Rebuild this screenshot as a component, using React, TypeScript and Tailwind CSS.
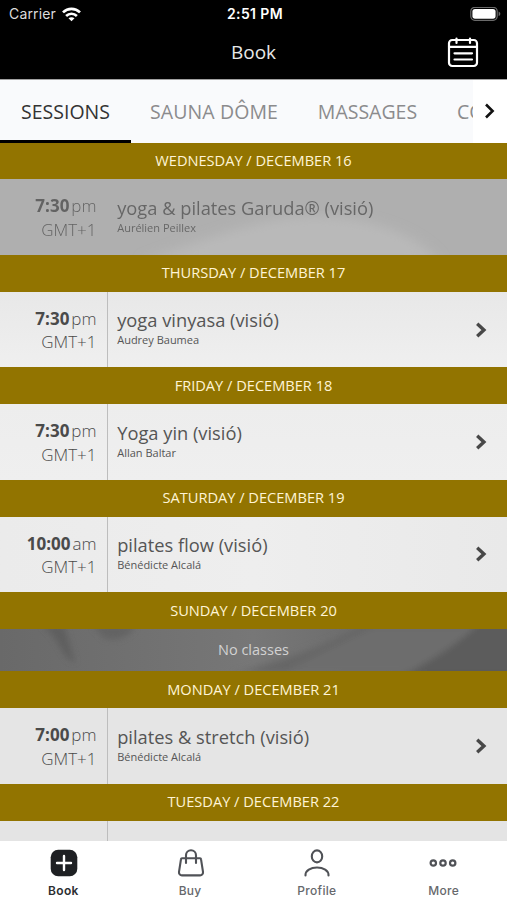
import clsx from "clsx";

type Session = {
  time: string;
  period: string;
  title: string;
  teacher: string;
  past?: boolean;
  shade: string;
};

type Day = {
  label: string;
  session?: Session;
};

const days: Day[] = [
  {
    label: "WEDNESDAY / DECEMBER 16",
    session: {
      time: "7:30",
      period: "pm",
      title: "yoga & pilates Garuda® (visió)",
      teacher: "Aurélien Peillex",
      past: true,
      shade: "bg-[#afafaf]",
    },
  },
  {
    label: "THURSDAY / DECEMBER 17",
    session: {
      time: "7:30",
      period: "pm",
      title: "yoga vinyasa (visió)",
      teacher: "Audrey Baumea",
      shade: "bg-linear-to-b from-[#e8e8e8] to-[#efefef]",
    },
  },
  {
    label: "FRIDAY / DECEMBER 18",
    session: {
      time: "7:30",
      period: "pm",
      title: "Yoga yin (visió)",
      teacher: "Allan Baltar",
      shade: "bg-linear-to-b from-[#ededed] to-[#efefef]",
    },
  },
  {
    label: "SATURDAY / DECEMBER 19",
    session: {
      time: "10:00",
      period: "am",
      title: "pilates flow (visió)",
      teacher: "Bénédicte Alcalá",
      shade: "bg-linear-to-r from-[#ebebeb] via-[#eeeeee] to-[#e9e9e9]",
    },
  },
  { label: "SUNDAY / DECEMBER 20" },
  {
    label: "MONDAY / DECEMBER 21",
    session: {
      time: "7:00",
      period: "pm",
      title: "pilates & stretch (visió)",
      teacher: "Bénédicte Alcalá",
      shade: "bg-[#e5e5e5]",
    },
  },
  { label: "TUESDAY / DECEMBER 22" },
];

function StatusBar() {
  return (
    <div className="flex h-7 items-center justify-between pr-[6px] pl-[9px] font-['Inter',sans-serif] text-white">
      <div className="flex w-[120px] items-center gap-[6px]">
        <span className="text-[14px] leading-none tracking-[0.15px] text-[#dcdcdc]">Carrier</span>
        <svg width="19" height="15" viewBox="0 0 19 15" fill="none" stroke="white" strokeWidth="2.7">
          <path d="M1 5.4C5.8.8 13.2.8 18 5.4" />
          <path d="M4.1 8.9c3.1-2.9 7.7-2.9 10.8 0" />
          <path d="M9.5 14.3 6.5 11.3c1.700-1.500 4.300-1.500 6 0Z" fill="white" stroke="none" />
        </svg>
      </div>
      <span className="text-[14px] leading-none font-semibold tracking-[0.4px]">2:51 PM</span>
      <div className="flex w-[120px] justify-end">
        <svg width="31" height="15" viewBox="0 0 31 15" fill="none">
          <rect x="0.8" y="0.3" width="26.4" height="13" rx="4" stroke="#6a6a6a" strokeWidth="1.2" />
          <rect x="2.4" y="1.9" width="23.2" height="9.8" rx="2.6" fill="white" />
          <path d="M28.6 4.500v4.600c1.100-.4 1.700-1.300 1.700-2.300s-.6-1.900-1.700-2.300Z" fill="#6a6a6a" />
        </svg>
      </div>
    </div>
  );
}

function TitleBar() {
  return (
    <div className="grid h-[52px] grid-cols-[1fr_auto_1fr] items-center border-b border-[#a0a0a0] pb-[2px]">
      <span />
      <h1 className="text-[19px] leading-none text-[#e8e8e8]">Book</h1>
      <svg
        className="mr-[28px] mb-[2px] justify-self-end"
        width="32"
        height="32"
        viewBox="0 0 32 32"
        fill="none"
        stroke="white"
        strokeWidth="2.2"
        strokeLinecap="round"
      >
        <rect x="2" y="4" width="28" height="26" rx="3.2" />
        <path d="M2 10.8h28M9.500 2.500v4.500M23 2.500v4.500M7.500 17.300h17.500M7.500 23.500h17.500" />
      </svg>
    </div>
  );
}

function Tabs() {
  return (
    <div className="flex h-[62.6px] bg-[#f9fafc] text-[19.5px] text-[#8b8b8d]">
      <div className="flex min-w-0 flex-1 overflow-hidden whitespace-nowrap">
        <div className="flex w-[131px] shrink-0 items-center justify-center border-b-[3px] border-black pt-[4px] text-[#333]">
          SESSIONS
        </div>
        <div className="flex w-[166px] shrink-0 items-center justify-center pt-px tracking-[0.1px]">SAUNA DÔME</div>
        <div className="flex w-[141px] shrink-0 items-center justify-center pt-px">MASSAGES</div>
        <div className="flex shrink-0 items-center pt-px pl-[19px]">COURS</div>
      </div>
      <div className="flex w-[34px] items-center justify-center bg-white">
        <svg width="12" height="18" viewBox="0 0 12 18" fill="none" stroke="#111" strokeWidth="2.6">
          <path d="m2 2.500 6.600 6.500L2 15.500" />
        </svg>
      </div>
    </div>
  );
}

function SessionRow({ session }: { session: Session }) {
  return (
    <div className={clsx("relative flex h-[75.6px] text-[#4a4a4a]", session.shade)}>
      {session.past && (
        <svg className="absolute inset-0 h-full w-full" viewBox="0 0 507 76" preserveAspectRatio="none">
          <defs>
            <filter id="soft">
              <feGaussianBlur stdDeviation="6" />
            </filter>
          </defs>
          <path d="M140 84C230 50 280 34 330 38c50 4 90 20 110 46Z" fill="#b9b9b9" filter="url(#soft)" />
        </svg>
      )}
      <div
        className={clsx(
          "flex w-[107.5px] flex-col items-end border-r pt-[15px] pr-[10px] text-[17px] leading-[23.5px]",
          session.past ? "border-transparent" : "border-[#bdbdbd]",
        )}
      >
        <div className={clsx("relative flex gap-[2px]", session.past && "opacity-75")}>
          <span className="font-bold">{session.time}</span>
          <span className="font-light">{session.period}</span>
        </div>
        <span className={clsx("relative font-light", session.past && "opacity-75")}>GMT+1</span>
      </div>
      <div className={clsx("relative flex-1 pt-[15.5px] pl-[9.7px] text-[#555]", session.past && "opacity-80")}>
        <div className="text-[18.3px] leading-[25px]">{session.title}</div>
        <div className="text-[11px] leading-[15px]">{session.teacher}</div>
      </div>
      {!session.past && (
        <svg
          className="mr-[19px] self-center"
          width="13"
          height="16"
          viewBox="0 0 13 16"
          fill="none"
          stroke="#484848"
          strokeWidth="3.400"
        >
          <path d="m2.200 1.800 6.700 6.200-6.700 6.200" />
        </svg>
      )}
    </div>
  );
}

function EmptyRow() {
  return (
    <div className="relative flex h-[42.4px] items-center justify-center overflow-hidden bg-linear-to-r from-[#696969] via-[#777] to-[#5e5e5e] text-[14.5px] text-[#d2d2d2]">
      <svg className="absolute inset-0 h-full w-full" viewBox="0 0 507 42" preserveAspectRatio="none">
        <defs>
          <filter id="fold" x="-10%" y="-30%" width="120%" height="160%">
            <feGaussianBlur stdDeviation="3" />
          </filter>
        </defs>
        <g filter="url(#fold)">
          <path d="M92 -4h44c-8 14-20 16-32 13Z" fill="#636363" />
          <path d="M42 -4h22l11 37c-14-4-12-20-33-37Z" fill="#5f5f5f" />
          <path d="M362 -4c-40 20-80 34-130 48h180C440 30 470 10 500-4Z" fill="#6d6d6d" />
          <path d="M478 -4c-20 18-44 34-75 50h110V-4Z" fill="#5c5c5c" />
          <path d="M362 -4c-34 20-60 30-112 46h35c30-16 60-30 95-46Z" fill="#666" />
        </g>
      </svg>
      <span className="relative">No classes</span>
    </div>
  );
}

function Schedule() {
  return (
    <main className="min-h-0 flex-1 overflow-hidden bg-[#e4e4e4]">
      {days.map((day, i) => (
        <section key={day.label}>
          <h2 className="flex h-[36.8px] items-center justify-center bg-[#927400] text-[14.6px] text-[#fff4d6]">
            {day.label}
          </h2>
          {day.session && <SessionRow session={day.session} />}
          {!day.session && i < days.length - 1 && <EmptyRow />}
        </section>
      ))}
      <div className="h-10 w-[107.5px] border-r border-[#bdbdbd]" />
    </main>
  );
}

function BookIcon() {
  return (
    <svg className="ml-px" width="28" height="28" viewBox="0 0 28 28" fill="none">
      <rect x="0.7" y="0.7" width="26.6" height="26.6" rx="7.5" fill="#1e2023" />
      <path d="M14 7v14M7 14h14" stroke="white" strokeWidth="2.4" strokeLinecap="round" />
    </svg>
  );
}

function BuyIcon() {
  return (
    <svg className="ml-px" width="28" height="28" viewBox="0 0 28 28" fill="none" stroke="#505257" strokeWidth="2.1" strokeLinecap="round">
      <path d="M5 9.3h18a1 1 0 0 1 1 .9l2 12.7a3 3 0 0 1-3 3.5H5a3 3 0 0 1-3-3.5l2-12.700a1 1 0 0 1 1-.9Z" />
      <path d="M9 14V6.300a5 5 0 0 1 10 0V14" />
    </svg>
  );
}

function ProfileIcon() {
  return (
    <svg width="28" height="28" viewBox="0 0 28 28" fill="none" stroke="#505257" strokeWidth="2.1" strokeLinecap="round">
      <ellipse cx="14" cy="7.400" rx="5.200" ry="6" />
      <path d="M2.500 26.500v-.5c0-4.200 5-7.500 11.500-7.500s11.500 3.300 11.500 7.500v.5" />
    </svg>
  );
}

function MoreIcon() {
  return (
    <svg className="mr-px" width="28" height="28" viewBox="0 0 28 28" fill="none" stroke="#505257" strokeWidth="2.200">
      <circle cx="4.300" cy="14" r="2.700" />
      <circle cx="14" cy="14" r="2.700" />
      <circle cx="23.700" cy="14" r="2.700" />
    </svg>
  );
}

const navItems = [
  { label: "Book", icon: BookIcon, active: true },
  { label: "Buy", icon: BuyIcon },
  { label: "Profile", icon: ProfileIcon },
  { label: "More", icon: MoreIcon },
];

function BottomNav() {
  return (
    <nav className="grid h-[59.4px] shrink-0 grid-cols-4 bg-white font-['Inter',sans-serif]">
      {navItems.map((item) => (
        <div key={item.label} className="flex flex-col items-center pt-[8.4px]">
          <item.icon />
          <span
            className={clsx(
              "mt-[6px] text-[12px] leading-[15px] tracking-[0.3px]",
              item.active ? "font-semibold text-[#2c2e31]" : "font-medium text-[#66686c]",
            )}
          >
            {item.label}
          </span>
        </div>
      ))}
    </nav>
  );
}

export default function App() {
  return (
    <div className="flex h-[900px] w-[507px] flex-col overflow-hidden bg-white font-['Open_Sans',sans-serif]">
      <header className="shrink-0 bg-black">
        <StatusBar />
        <TitleBar />
        <Tabs />
      </header>
      <Schedule />
      <BottomNav />
    </div>
  );
}
